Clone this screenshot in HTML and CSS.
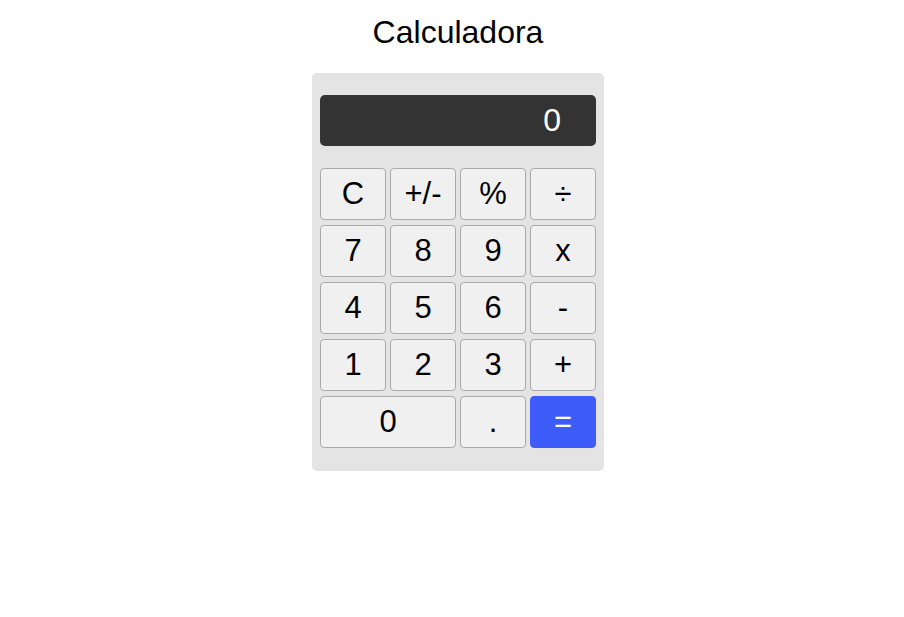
FILE: index.html
```html
<!DOCTYPE html>
<html lang="es">
<head>
<meta charset="utf-8">
<title>Calculadora</title>
<link rel="stylesheet" href="styles.css">
</head>
<body>
<h1 class="title">Calculadora</h1>
<div class="calc">
  <div class="display">0</div>
  <div class="keys">
    <button class="key">C</button>
    <button class="key">+/-</button>
    <button class="key">%</button>
    <button class="key">÷</button>
    <button class="key">7</button>
    <button class="key">8</button>
    <button class="key">9</button>
    <button class="key">x</button>
    <button class="key">4</button>
    <button class="key">5</button>
    <button class="key">6</button>
    <button class="key">-</button>
    <button class="key">1</button>
    <button class="key">2</button>
    <button class="key">3</button>
    <button class="key">+</button>
    <button class="key wide">0</button>
    <button class="key">.</button>
    <button class="key equals">=</button>
  </div>
</div>
</body>
</html>
```
FILE: styles.css
```css
html, body {
  margin: 0;
  background: #ffffff;
}
body {
  font-family: "Liberation Sans", Arial, sans-serif;
  display: flex;
  flex-direction: column;
  align-items: center;
  padding-left: 12px;
}
.title {
  font-size: 32px;
  font-weight: normal;
  line-height: 36px;
  margin: 14px 0 23px;
  color: #000;
}
.calc {
  width: 276px;
  padding: 22px 8px 23px;
  background: #e4e4e4;
  border-radius: 5px;
}
.display {
  height: 51px;
  background: #333333;
  color: #ffffff;
  border-radius: 5px;
  font-size: 32px;
  line-height: 50px;
  text-align: right;
  padding-right: 35px;
  margin-bottom: 22px;
}
.keys {
  display: grid;
  grid-template-columns: repeat(4, 66px);
  grid-auto-rows: 52px;
  column-gap: 4px;
  row-gap: 5px;
}
.key {
  font-family: "Liberation Sans", Arial, sans-serif;
  font-size: 31px;
  background: #f0f0f0;
  border: 1px solid #aaaaaa;
  border-radius: 4px;
  color: #000;
  padding: 0;
  margin: 0;
}
.wide {
  grid-column: span 2;
}
.equals {
  background: #3d5cfa;
  border-color: #3d5cfa;
  color: #ffffff;
}
```
